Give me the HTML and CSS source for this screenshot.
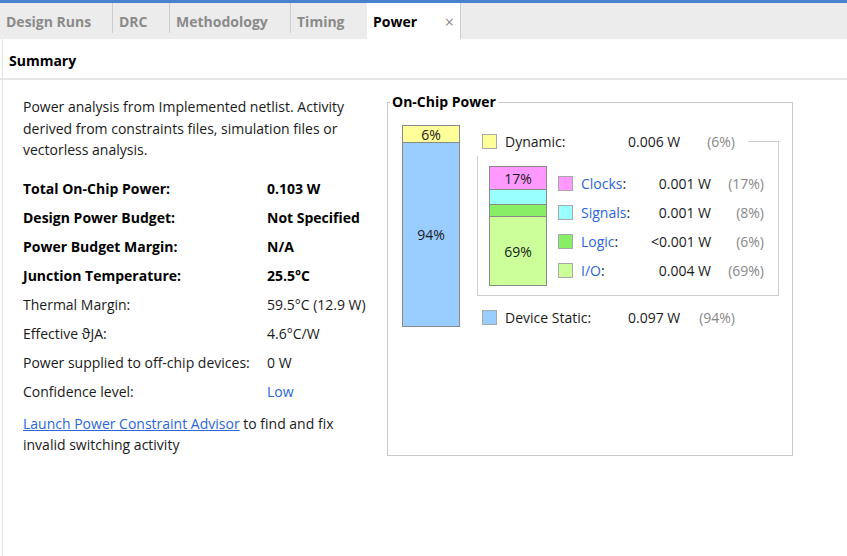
FILE: index.html
```html
<!DOCTYPE html>
<html>
<head>
<meta charset="utf-8">
<title>Power</title>
<link rel="stylesheet" href="styles.css">
</head>
<body>
<div class="topline"></div>
<div class="tabs">
  <div class="tab tab-runs">Design Runs</div>
  <div class="tab tab-drc">DRC</div>
  <div class="tab tab-meth">Methodology</div>
  <div class="tab tab-timing">Timing</div>
  <div class="tab tab-power active"><span>Power</span><span class="close">×</span></div>
</div>
<div class="panel">
  <div class="summary">Summary</div>
  <div class="content">
    <div class="left">
      <p class="intro">Power analysis from Implemented netlist. Activity derived from constraints files, simulation files or vectorless analysis.</p>
      <div class="rows">
        <div class="row bold"><span>Total On-Chip Power:</span><span>0.103 W</span></div>
        <div class="row bold"><span>Design Power Budget:</span><span>Not Specified</span></div>
        <div class="row bold"><span>Power Budget Margin:</span><span>N/A</span></div>
        <div class="row bold"><span>Junction Temperature:</span><span>25.5°C</span></div>
        <div class="row"><span>Thermal Margin:</span><span>59.5°C (12.9 W)</span></div>
        <div class="row"><span>Effective ϑJA:</span><span>4.6°C/W</span></div>
        <div class="row"><span>Power supplied to off-chip devices:</span><span>0 W</span></div>
        <div class="row"><span>Confidence level:</span><span class="link-plain">Low</span></div>
      </div>
      <p class="advisor"><a href="#" class="link">Launch Power Constraint Advisor</a> to find and fix<br>invalid switching activity</p>
    </div>
    <fieldset class="group">
      <legend>On-Chip Power</legend>
      <div class="chart">
        <div class="bar big">
          <div class="seg yellow s-dyn">6%</div>
          <div class="seg blue s-static">94%</div>
        </div>
        <div class="legend">
          <div class="lrow dynrow">
            <span class="sw yellow"></span>
            <span class="name">Dynamic:</span>
            <span class="val">0.006 W</span>
            <span class="pct">(6%)</span>
          </div>
          <div class="dynbox">
            <div class="bar small">
              <div class="seg pink s-clk">17%</div>
              <div class="seg cyan s-sig"></div>
              <div class="seg green s-log"></div>
              <div class="seg lime s-io">69%</div>
            </div>
            <div class="sublegend">
              <div class="srow"><span class="sw pink"></span><span class="sname"><span class="blue-t">Clocks</span>:</span><span class="sval">0.001 W</span><span class="spct">(17%)</span></div>
              <div class="srow"><span class="sw cyan"></span><span class="sname"><span class="blue-t">Signals</span>:</span><span class="sval">0.001 W</span><span class="spct">(8%)</span></div>
              <div class="srow"><span class="sw green"></span><span class="sname"><span class="blue-t">Logic</span>:</span><span class="sval">&lt;0.001 W</span><span class="spct">(6%)</span></div>
              <div class="srow"><span class="sw lime"></span><span class="sname"><span class="blue-t">I/O</span>:</span><span class="sval">0.004 W</span><span class="spct">(69%)</span></div>
            </div>
          </div>
          <div class="lrow staticrow">
            <span class="sw blue"></span>
            <span class="name">Device Static:</span>
            <span class="val">0.097 W</span>
            <span class="pct">(94%)</span>
          </div>
        </div>
      </div>
    </fieldset>
  </div>
</div>
</body>
</html>
```

FILE: styles.css
```css
* { box-sizing: border-box; }
html, body { margin: 0; padding: 0; background: #fff; }
body {
  width: 847px;
  height: 556px;
  overflow: hidden;
  font-family: "Open Sans", "Noto Sans", sans-serif;
  font-size: 14px;
  color: #1a1a1a;
}
.topline { height: 3px; background: #4a80d0; }
.tabs {
  display: flex;
  align-items: flex-start;
  height: 36px;
  background: #ececec;
}
.tab {
  height: 30px;
  padding: 9px 0 0 6px;
  font-weight: 700;
  font-size: 14px;
  color: #8a8a8a;
  border-right: 1px solid #cdcdcd;
  white-space: nowrap;
  line-height: 20px;
}
.tab-runs { width: 113px; }
.tab-drc { width: 57px; }
.tab-meth { width: 121px; }
.tab-timing { width: 76px; border-right: none; }
.tab.active {
  width: 94px;
  height: 36px;
  background: #fff;
  color: #000;
  display: flex;
  justify-content: space-between;
  padding-right: 6px;
}
.close { color: #8a8a8a; font-weight: 400; font-size: 16px; }
.panel {
  margin-left: 2px;
  border-left: 1px solid #e2e2e2;
  height: 517px;
}
.summary {
  height: 41px;
  margin-left: -3px;
  padding: 2px 0 0 9px;
  line-height: 39px;
  font-weight: 700;
  font-size: 14px;
  color: #000;
  border-bottom: 2px solid #e6e6e6;
}
.content {
  display: flex;
  align-items: flex-start;
  padding: 16px 0 0 20px;
}
.left { width: 364px; }
.intro { margin: 0; line-height: 21.5px; width: 340px; }
.rows { margin-top: 13px; }
.row {
  display: grid;
  grid-template-columns: 244px 1fr;
  height: 29px;
  line-height: 29px;
  white-space: nowrap;
}
.row.bold { font-weight: 700; color: #000; }
.link-plain { color: #2a66d9; }
.advisor { margin: 7px 0 0; line-height: 21px; width: 340px; }
.link { color: #2a66d9; text-decoration: underline; }

.group {
  width: 406px;
  height: 363px;
  margin: -3px 0 0;
  padding: 0;
  border: 1px solid #c9c9c9;
}
.group legend {
  font-weight: 700;
  font-size: 14px;
  color: #000;
  padding: 0 2px;
  margin-left: 2px;
  line-height: 18px;
}
.chart { display: flex; align-items: flex-start; padding: 14px 0 0 14px; }
.bar {
  width: 58px;
  border: 1px solid #8a8a8a;
  display: flex;
  flex-direction: column;
  text-align: center;
}
.bar.big { height: 202px; }
.bar.small { height: 120px; }
.seg { display: flex; align-items: center; justify-content: center; overflow: hidden; }
.s-dyn { height: 17px; border-bottom: 1px solid #8a8a8a; }
.s-static { flex: 1; }
.s-clk { height: 23px; border-bottom: 1px solid #8a8a8a; }
.s-sig { height: 15px; border-bottom: 1px solid #8a8a8a; }
.s-log { height: 12px; border-bottom: 1px solid #8a8a8a; }
.s-io { flex: 1; }
.yellow { background: #ffff99; }
.blue { background: #99ccff; }
.pink { background: #ff99ff; }
.cyan { background: #99ffff; }
.green { background: #88ee66; }
.lime { background: #ccff99; }

.legend { width: 302px; margin-left: 17px; }
.lrow {
  display: grid;
  grid-template-columns: 15px 131px 53px 54px;
  align-items: center;
  height: 29px;
  padding-left: 5px;
  white-space: nowrap;
}
.lrow .name { margin-left: 8px; }
.pct, .spct { color: #888; text-align: right; }
.dynrow { margin-top: 2px; position: relative; }
.dynrow::after {
  content: "";
  position: absolute;
  left: 271px;
  right: 0;
  top: 14px;
  bottom: 0;
  border-top: 1px solid #cfcfcf;
  border-right: 1px solid #cfcfcf;
}
.sw {
  width: 15px;
  height: 15px;
  border: 1px solid #a8a8a8;
  display: block;
}
.dynbox {
  display: flex;
  align-items: center;
  border: 1px solid #cfcfcf;
  border-top: none;
  padding: 10px 0 9px 11px;
}
.sublegend { margin-left: 11px; padding-top: 1px; }
.srow {
  display: grid;
  grid-template-columns: 15px 78px 60px 53px;
  align-items: center;
  height: 29px;
  white-space: nowrap;
}
.srow .sname { margin-left: 8px; }
.sval { text-align: right; }
.blue-t { color: #2a66d9; }
.staticrow { margin-top: 7px; }
```
